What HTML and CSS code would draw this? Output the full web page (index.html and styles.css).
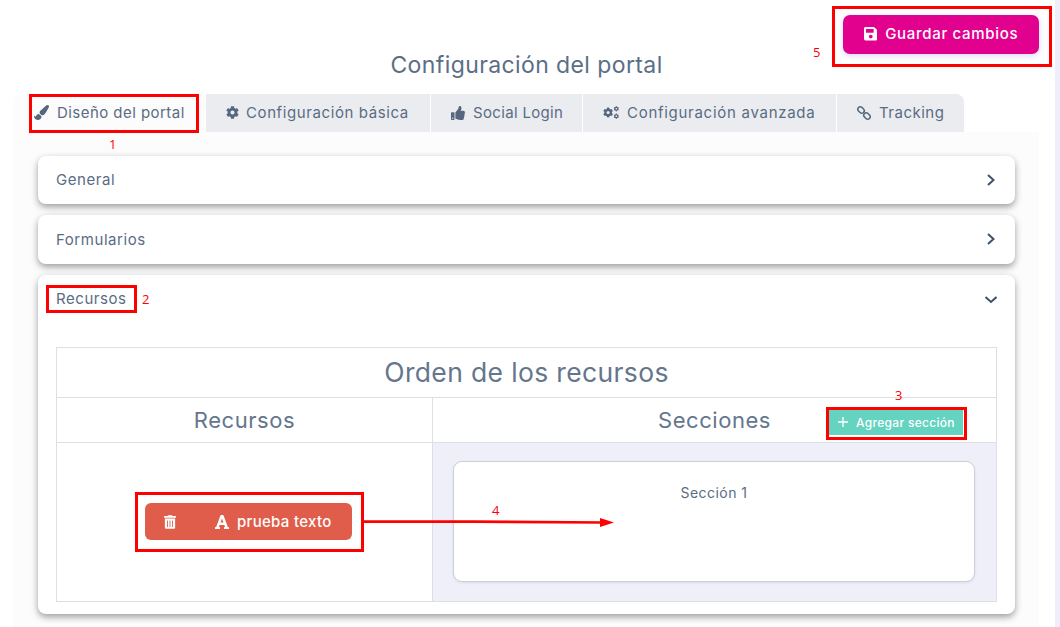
FILE: index.html
```html
<!DOCTYPE html>
<html lang="es">
<head>
<meta charset="utf-8">
<title>Configuración del portal</title>
<link rel="stylesheet" href="styles.css">
</head>
<body>
<svg class="defs" width="0" height="0" aria-hidden="true">
  <defs>
    <path id="i-cog" d="M487.4 315.7l-42.6-24.6c4.3-23.2 4.3-47 0-70.2l42.6-24.6c4.9-2.8 7.1-8.6 5.5-14-11.1-35.6-30-67.8-54.7-94.6-3.8-4.1-10-5.1-14.8-2.3L380.8 110c-17.9-15.4-38.5-27.3-60.8-35.1V25.8c0-5.6-3.9-10.5-9.4-11.7-36.7-8.2-74.3-7.8-109.2 0-5.5 1.2-9.4 6.1-9.4 11.7V75c-22.2 7.9-42.8 19.8-60.8 35.1L88.7 85.5c-4.9-2.8-11-1.9-14.8 2.3-24.7 26.7-43.6 58.9-54.7 94.6-1.7 5.4.6 11.2 5.5 14L67.3 221c-4.3 23.2-4.3 47 0 70.2l-42.6 24.6c-4.9 2.8-7.1 8.6-5.5 14 11.1 35.6 30 67.8 54.7 94.6 3.8 4.1 10 5.1 14.8 2.3l42.6-24.6c17.9 15.4 38.5 27.3 60.8 35.1v49.2c0 5.6 3.9 10.5 9.4 11.7 36.7 8.2 74.3 7.8 109.2 0 5.5-1.2 9.4-6.1 9.4-11.7v-49.2c22.2-7.9 42.8-19.8 60.8-35.1l42.6 24.6c4.9 2.8 11 1.9 14.8-2.3 24.7-26.7 43.6-58.9 54.7-94.6 1.5-5.5-.7-11.3-5.6-14.1zM256 336c-44.1 0-80-35.9-80-80s35.9-80 80-80 80 35.9 80 80-35.9 80-80 80z"/>
  </defs>
</svg>
<div class="page">
  <main class="main">
    <div class="topbar">
      <button class="btn-save">
        <svg class="ico-save" viewBox="0 0 448 512"><path d="M433.941 129.941l-83.882-83.882A48 48 0 0 0 316.118 32H48C21.49 32 0 53.49 0 80v352c0 26.51 21.49 48 48 48h352c26.51 0 48-21.49 48-48V163.882a48 48 0 0 0-14.059-33.941zM224 416c-35.346 0-64-28.654-64-64 0-35.346 28.654-64 64-64s64 28.654 64 64c0 35.346-28.654 64-64 64zm96-304.52V212c0 6.627-5.373 12-12 12H76c-6.627 0-12-5.373-12-12V108c0-6.627 5.373-12 12-12h228.52c3.183 0 6.235 1.264 8.485 3.515l3.48 3.48A11.996 11.996 0 0 1 320 111.48z"/></svg>
        <span>Guardar cambios</span>
      </button>
    </div>
    <h1 class="title">Configuración del portal</h1>
    <nav class="tabs">
      <a class="tab tab-active tab-w1">
        <svg class="ico ico-15" viewBox="0 0 512 512"><path d="M167.02 309.34c-40.12 2.58-76.53 17.86-97.19 72.3-2.35 6.21-8 9.98-14.59 9.98-11.11 0-45.46-27.67-55.25-34.35C0 439.62 37.93 512 128 512c75.86 0 128-43.77 128-120.19 0-3.11-.65-6.08-.97-9.13l-88.01-73.34zM457.89 0c-15.16 0-29.37 6.71-40.21 16.45C213.27 199.05 192 203.34 192 257.09c0 13.7 3.25 26.76 8.73 38.7l63.82 53.18c7.21 1.8 14.64 3.03 22.39 3.03 62.11 0 98.11-45.47 211.16-256.46 7.38-14.35 13.9-29.85 13.9-45.99C512 20.64 486 0 457.89 0z"/></svg>
        <span>Diseño del portal</span>
      </a>
      <a class="tab tab-w2">
        <svg class="ico ico-13" viewBox="0 0 512 512"><use href="#i-cog"/></svg>
        <span>Configuración básica</span>
      </a>
      <a class="tab tab-w3">
        <svg class="ico ico-14" viewBox="0 0 512 512"><path d="M104 224H24c-13.255 0-24 10.745-24 24v240c0 13.255 10.745 24 24 24h80c13.255 0 24-10.745 24-24V248c0-13.255-10.745-24-24-24zM64 472c-13.255 0-24-10.745-24-24s10.745-24 24-24 24 10.745 24 24-10.745 24-24 24zM384 81.452c0 42.416-25.97 66.208-33.277 94.548h101.723c33.397 0 59.397 27.746 59.553 58.098.084 17.938-7.546 37.249-19.439 49.197l-.11.11c9.836 23.337 8.237 56.037-9.308 79.469 8.681 25.895-.069 57.704-16.382 74.757 4.298 17.598 2.244 32.575-6.148 44.632C440.202 511.587 389.616 512 346.839 512l-2.845-.001c-48.287-.017-87.806-17.598-119.56-31.725-15.957-7.099-36.821-15.887-52.651-16.178-6.54-.12-11.783-5.457-11.783-11.998v-213.77c0-3.2 1.282-6.271 3.558-8.521 39.614-39.144 56.648-80.587 89.117-113.111 14.804-14.832 20.188-37.236 25.393-58.902C282.515 39.293 291.817 0 312 0c24 0 72 8 72 81.452z"/></svg>
        <span>Social Login</span>
      </a>
      <a class="tab tab-w4">
        <svg class="ico ico-wide" viewBox="0 0 640 512">
          <use href="#i-cog" transform="translate(0 51) scale(.8)"/>
          <use href="#i-cog" transform="translate(425 0) scale(.42)"/>
          <use href="#i-cog" transform="translate(425 297) scale(.42)"/>
        </svg>
        <span>Configuración avanzada</span>
      </a>
      <a class="tab tab-last tab-w5">
        <svg class="ico ico-14" viewBox="0 0 16 16"><g class="link-strokes"><rect x="-4" y="-2.8" width="8" height="5.6" rx="2.8" transform="translate(4.6 4.6) rotate(45)"/><rect x="-4" y="-2.8" width="8" height="5.6" rx="2.8" transform="translate(11.4 11.4) rotate(45)"/></g></svg>
        <span>Tracking</span>
      </a>
    </nav>
    <section class="panel">
      <div class="card">
        <div class="card-head"><span>General</span>
          <svg class="chev" viewBox="0 0 14 14"><polyline points="5,2 10.5,7 5,12"/></svg>
        </div>
      </div>
      <div class="card">
        <div class="card-head card-head-tall"><span>Formularios</span>
          <svg class="chev" viewBox="0 0 14 14"><polyline points="5,2 10.5,7 5,12"/></svg>
        </div>
      </div>
      <div class="card">
        <div class="card-head"><span>Recursos</span>
          <svg class="chev" viewBox="0 0 14 14"><polyline points="2.5,5 8,10 13.5,5"/></svg>
        </div>
        <div class="card-body">
          <div class="order">
            <div class="order-title">Orden de los recursos</div>
            <div class="order-head">Recursos</div>
            <div class="order-head order-head-sec">
              <span class="sec-label">Secciones</span>
              <button class="btn-add">
                <svg class="ico-plus" viewBox="0 0 12 12"><path d="M6 1v10M1 6h10"/></svg>
                <span>Agregar sección</span>
              </button>
            </div>
            <div class="order-res">
              <div class="res-btn">
                <svg class="ico-trash" viewBox="0 0 448 512"><path d="M32 464a48 48 0 0 0 48 48h288a48 48 0 0 0 48-48V128H32zm272-256a16 16 0 0 1 32 0v224a16 16 0 0 1-32 0zm-96 0a16 16 0 0 1 32 0v224a16 16 0 0 1-32 0zm-96 0a16 16 0 0 1 32 0v224a16 16 0 0 1-32 0zM432 32H312l-9.4-18.7A24 24 0 0 0 281.1 0H166.8a23.72 23.72 0 0 0-21.4 13.3L136 32H16A16 16 0 0 0 0 48v32a16 16 0 0 0 16 16h416a16 16 0 0 0 16-16V48a16 16 0 0 0-16-16z"/></svg>
                <svg class="ico-font" viewBox="0 0 448 512"><path d="M432 416h-23.41L277.88 53.69A32 32 0 0 0 247.58 32h-47.16a32 32 0 0 0-30.3 21.69L39.41 416H16a16 16 0 0 0-16 16v32a16 16 0 0 0 16 16h128a16 16 0 0 0 16-16v-32a16 16 0 0 0-16-16h-19.58l23.3-64h152.56l23.3 64H304a16 16 0 0 0-16 16v32a16 16 0 0 0 16 16h128a16 16 0 0 0 16-16v-32a16 16 0 0 0-16-16zM176.85 272L224 142.51 271.15 272z"/></svg>
                <span>prueba texto</span>
              </div>
            </div>
            <div class="order-sec">
              <div class="section-box">Sección 1</div>
            </div>
          </div>
        </div>
      </div>
    </section>
  </main>

  <div class="mark mark-tab"></div>
  <div class="mark mark-res"></div>
  <div class="mark mark-add"></div>
  <div class="mark mark-btn"></div>
  <div class="mark mark-save"></div>
  <span class="num num-1">1</span>
  <span class="num num-2">2</span>
  <span class="num num-3">3</span>
  <span class="num num-4">4</span>
  <span class="num num-5">5</span>
  <svg class="arrow" viewBox="0 0 252 12"><path class="arrow-line" d="M0 5.6H110L238 6.5"/><path class="arrow-head" d="M236 2L250 6.5L236 11Z"/></svg>
</div>
</body>
</html>
```

FILE: styles.css
```css
* { box-sizing: border-box; }
html, body { margin: 0; padding: 0; }
body {
  height: 627px;
  overflow: hidden;
  background: #eeeffa;
  font-family: "Inter", "Open Sans", sans-serif;
  color: #5a6c83;
}
.defs { position: absolute; }
.page {
  position: relative;
  width: 1055px;
  height: 627px;
  background: #fff;
  overflow: hidden;
}
.main { margin: 0 16px 0 14px; }
.topbar {
  height: 50px;
  padding: 15px 0 0;
  display: flex;
  justify-content: flex-end;
  align-items: flex-start;
}
.btn-save {
  flex: none;
  width: 196px;
  height: 39px;
  border: 0;
  border-radius: 7px;
  background: #e2008f;
  color: #fff;
  font: 500 15px "Inter", sans-serif;
  letter-spacing: .7px;
  display: flex;
  align-items: center;
  justify-content: center;
  gap: 8px;
  padding: 0 0 2px;
  box-shadow: 0 2px 6px rgba(90, 90, 230, .22);
}
.ico-save { width: 13.5px; height: 15.4px; fill: #fff; margin-top: 1px; }
.title {
  margin: 0 0 14px;
  height: 30px;
  line-height: 30px;
  text-align: center;
  font-size: 23px;
  font-weight: 400;
  letter-spacing: .4px;
  color: #5b6e85;
}
.tabs { display: flex; gap: 1px; height: 38px; }
.tab {
  display: flex;
  align-items: center;
  gap: 8px;
  padding: 0 0 1px 20px;
  background: #ebecf0;
  font-size: 15px;
  font-weight: 400;
  letter-spacing: .5px;
  color: #5a6c83;
  white-space: nowrap;
}
.tab-w1 { width: 191px; letter-spacing: .45px; }
.tab-w2 { width: 224px; gap: 7px; letter-spacing: .6px; }
.tab-w3 { width: 151px; letter-spacing: .33px; }
.tab-w4 { width: 253px; letter-spacing: .72px; }
.tab-w5 { width: 127px; }
.tab-active { background: #fcfcfd; border-radius: 8px 0 0 0; }
.tab-last { border-radius: 0 8px 0 0; }
.ico { fill: #55677e; flex: none; }
.ico-15 { width: 15px; height: 15px; }
.ico-14 { width: 14px; height: 14px; }
.ico-13 { width: 13px; height: 13px; }
.ico-wide { width: 16px; height: 13px; }
.link-strokes { fill: none; stroke: #55677e; stroke-width: 1.8; }
.panel {
  background: #fcfcfd;
  padding: 24px 24px 40px;
  height: 495px;
}
.card {
  background: #fff;
  border-radius: 8px;
  margin-bottom: 11px;
  box-shadow: 0 3px 7px rgba(0, 0, 0, .38);
}
.card-head {
  height: 48px;
  padding: 0 18px 1px;
  display: flex;
  align-items: center;
  justify-content: space-between;
  font-size: 15px;
  letter-spacing: .55px;
  color: #5a6c83;
}
.card-head-tall { height: 49px; }
.chev { width: 14px; height: 14px; fill: none; stroke: #3f526b; stroke-width: 2; }
.card-body { padding: 24px 18px 12px; }
.order {
  display: grid;
  grid-template-columns: 375px 1fr;
  grid-template-rows: 49px 45px 159px;
  border: 1px solid #dcdfe4;
}
.order-title {
  grid-column: 1 / 3;
  display: flex;
  align-items: center;
  justify-content: center;
  padding-bottom: 2px;
  font-size: 26.5px;
  font-weight: 400;
  letter-spacing: .35px;
  color: #64768c;
}
.order-head {
  display: flex;
  align-items: center;
  justify-content: center;
  padding-bottom: 1px;
  font-size: 22px;
  letter-spacing: .55px;
  color: #64768c;
  border-top: 1px solid #dcdfe4;
}
.order-head-sec {
  display: grid;
  grid-template-columns: 1fr auto 1fr;
  border-left: 1px solid #dcdfe4;
}
.sec-label { grid-column: 2; }
.btn-add {
  grid-column: 3;
  justify-self: end;
  margin: 5px 33px 0 0;
  width: 134px;
  height: 26px;
  border: 0;
  background: #64d3c0;
  color: #fff;
  font: 500 12px "Inter", sans-serif;
  letter-spacing: .3px;
  display: flex;
  align-items: center;
  justify-content: center;
  gap: 7px;
  padding: 0;
}
.ico-plus { width: 12px; height: 12px; fill: none; stroke: #fff; stroke-width: 1.3; }
.order-res {
  border-top: 1px solid #dcdfe4;
  display: flex;
  align-items: center;
  justify-content: center;
  padding: 0 0 1px 8px;
}
.res-btn {
  width: 207px;
  height: 37px;
  border-radius: 6px;
  background: #e05d4b;
  color: #fff;
  font-size: 15px;
  font-weight: 500;
  letter-spacing: .3px;
  display: flex;
  align-items: center;
  padding-left: 19px;
}
.ico-trash { width: 12px; height: 14px; fill: #fff; margin-right: 39px; }
.ico-font { width: 14px; height: 16px; fill: #fff; margin-right: 8px; }
.order-sec {
  border-top: 1px solid #dcdfe4;
  border-left: 1px solid #dcdfe4;
  background: #eeeff8;
  padding: 18px 21px 19px 20px;
}
.section-box {
  height: 121px;
  border: 1px solid #ccd0d6;
  border-radius: 9px;
  background: #fff;
  text-align: center;
  padding-top: 22px;
  font-size: 14px;
  line-height: 18px;
  letter-spacing: .45px;
  color: #5a6c83;
  box-shadow: 0 1px 3px rgba(0, 0, 0, .08);
}

/* Annotations drawn over the screenshot */
.mark { position: absolute; border: 3px solid #f00; }
.mark-tab { left: 29px; top: 94px; width: 170px; height: 39px; }
.mark-res { left: 46px; top: 285px; width: 91px; height: 28px; }
.mark-add { left: 826px; top: 407px; width: 141px; height: 33px; }
.mark-btn { left: 135px; top: 492px; width: 229px; height: 60px; }
.mark-save { left: 832px; top: 6px; width: 220px; height: 61px; }
.num {
  position: absolute;
  color: #f00;
  font: 400 13px/14px "Open Sans", sans-serif;
}
.num-1 { left: 109px; top: 137px; }
.num-2 { left: 142px; top: 292px; }
.num-3 { left: 895px; top: 388px; }
.num-4 { left: 492px; top: 503px; }
.num-5 { left: 813px; top: 45px; }
.arrow { position: absolute; left: 364px; top: 516px; width: 252px; height: 12px; }
.arrow-line { fill: none; stroke: #f00; stroke-width: 2.6; }
.arrow-head { fill: #f00; }
```
